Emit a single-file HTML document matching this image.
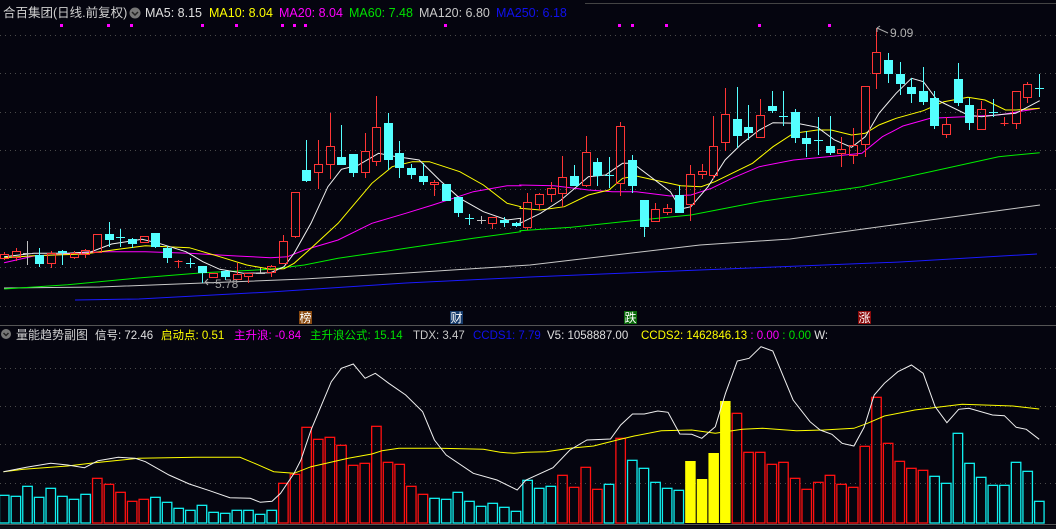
<!DOCTYPE html>
<html><head><meta charset="utf-8"><style>
html,body{margin:0;padding:0;background:#05050f;width:1056px;height:529px;overflow:hidden}
svg{display:block}
text{font-family:"Liberation Sans","Noto Sans CJK SC",sans-serif;font-size:12.5px}
text.sm{font-size:11.5px}
text.md{font-size:12px}
</style></head><body>
<svg id="s" width="1056" height="529" viewBox="0 0 1056 529" xmlns="http://www.w3.org/2000/svg">
<rect width="1056" height="529" fill="#05050f"/>
<g id="grid" stroke="#4a4a4a" stroke-width="1" stroke-dasharray="1,4">
<line x1="0" y1="35.5" x2="1056" y2="35.5"/><line x1="0" y1="73.5" x2="1056" y2="73.5"/>
<line x1="0" y1="112.5" x2="1056" y2="112.5"/><line x1="0" y1="150.5" x2="1056" y2="150.5"/>
<line x1="0" y1="189.5" x2="1056" y2="189.5"/><line x1="0" y1="228.5" x2="1056" y2="228.5"/>
<line x1="0" y1="267.5" x2="1056" y2="267.5"/><line x1="0" y1="306.5" x2="1056" y2="306.5"/>
<line x1="0" y1="368.5" x2="1056" y2="368.5"/><line x1="0" y1="406.5" x2="1056" y2="406.5"/>
<line x1="0" y1="444.5" x2="1056" y2="444.5"/><line x1="0" y1="483.5" x2="1056" y2="483.5"/>
</g>
<line x1="585" y1="3.5" x2="1056" y2="3.5" stroke="#444"/>
<line x1="0" y1="325.5" x2="1056" y2="325.5" stroke="#555"/>
<line x1="0" y1="524.5" x2="1056" y2="524.5" stroke="#555"/>
<rect x="0" y="526" width="1056" height="3" fill="#101018"/>
<g id="lines" fill="none" stroke-width="1"></g>
<g id="candles"></g>
<g id="vol"></g>
<g id="vlines" fill="none" stroke-width="1"></g>
<text x="3" y="17" fill="#d0d0d0">合百集团(日线.前复权)</text>
<circle cx="135" cy="13" r="5.5" fill="#777"/>
<path d="M132 12 L135 15 L138 12" stroke="#222" stroke-width="1.5" fill="none"/>
<text x="145" y="17" fill="#e0e0e0">MA5: 8.15</text>
<text x="209" y="17" fill="#ffff00">MA10: 8.04</text>
<text x="279" y="17" fill="#ff00ff">MA20: 8.04</text>
<text x="349" y="17" fill="#00e000">MA60: 7.48</text>
<text x="419" y="17" fill="#c8c8c8">MA120: 6.80</text>
<text x="496" y="17" fill="#1010ee">MA250: 6.18</text>
<g fill="#ff00ff">
<rect x="60" y="24" width="3" height="3"/><rect x="107" y="24" width="3" height="3"/><rect x="130" y="24" width="3" height="3"/>
<rect x="201" y="24" width="3" height="3"/><rect x="235" y="24" width="3" height="3"/><rect x="281" y="24" width="3" height="3"/>
<rect x="293" y="24" width="3" height="3"/><rect x="304" y="24" width="3" height="3"/><rect x="444" y="24" width="3" height="3"/>
<rect x="618" y="24" width="3" height="3"/><rect x="631" y="24" width="3" height="3"/><rect x="665" y="24" width="3" height="3"/>
<rect x="758" y="24" width="3" height="3"/><rect x="828" y="24" width="3" height="3"/>
</g>
<path d="M877 28 L888 33 M877 28 l0 4 M877 28 l3 -2" stroke="#aaa" fill="none"/>
<text x="890" y="37" fill="#b0b0b0" class="md">9.09</text>
<path d="M205 282 L214 283 M205 282 l3 -3 M205 282 l3 3" stroke="#aaa" fill="none"/>
<text x="215" y="288" fill="#a0a0a0" class="md">5.78</text>
<rect x="299" y="311" width="13" height="13" fill="#8a4a10"/><text x="299.5" y="322" fill="#fff" class="md">榜</text>
<rect x="450" y="311" width="13" height="13" fill="#153a6a"/><text x="450.5" y="322" fill="#fff" class="md">财</text>
<rect x="624" y="311" width="13" height="13" fill="#0a6a0a"/><text x="624.5" y="322" fill="#fff" class="md">跌</text>
<rect x="858" y="311" width="13" height="13" fill="#8a0a0a"/><text x="858.5" y="322" fill="#fff" class="md">涨</text>
<circle cx="6" cy="334" r="5" fill="#777"/>
<path d="M3.5 333 L6 335.5 L8.5 333" stroke="#222" stroke-width="1.5" fill="none"/>
<text x="16" y="339" fill="#d0d0d0" class="md">量能趋势副图</text>
<text x="95" y="339" fill="#e0e0e0" class="sm">信号: 72.46</text>
<text x="161" y="339" fill="#ffff00" class="sm">启动点: 0.51</text>
<text x="234" y="339" fill="#ff00ff" class="sm">主升浪: -0.84</text>
<text x="310" y="339" fill="#00e000" class="sm">主升浪公式: 15.14</text>
<text x="413" y="339" fill="#c8c8c8" class="sm">TDX: 3.47</text>
<text x="473" y="339" fill="#1010ee" class="sm">CCDS1: 7.79</text>
<text x="547" y="339" fill="#e0e0e0" class="sm">V5: 1058887.00</text>
<text x="641" y="339" class="sm" xml:space="preserve"><tspan fill="#ffff00">CCDS2: 1462846.13</tspan><tspan fill="#ff00ff"> : 0.00</tspan><tspan fill="#00e000"> : 0.00</tspan><tspan fill="#e0e0e0"> W:</tspan></text>
</svg>
<script>
var NS="http://www.w3.org/2000/svg";
function el(p,t,a){var e=document.createElementNS(NS,t);for(var k in a)e.setAttribute(k,a[k]);p.appendChild(e);return e;}
var C=[
["r",523,535,515,540],["r",513,530,505,542],["g",518,518,483,555],["c",525,551,503,560],["r",520,550,513,563],
["c",513,520,510,556],["r",520,532,513,537],["r",510,522,508,533],["r",462,515,462,520],["c",462,480,426,500],
["c",470,470,447,500],["c",478,492,475,505],["r",468,485,468,490],["c",459,500,459,503],["c",503,533,497,548],
["r",543,543,540,563],["c",548,548,535,565],["c",558,578,558,610],["r",578,592,578,595],["c",573,590,570,600],
["r",583,596,550,600],["r",580,588,578,610],["g",578,578,563,583],["r",558,577,556,590],["r",484,548,465,552],
["r",337,467,337,473],["c",270,302,180,305],["r",252,275,180,327],["r",198,253,98,297],["c",232,254,135,254],
["c",222,278,222,290],["r",213,275,158,294],["r",142,242,48,258],["c",128,240,98,270],["c",218,263,183,293],
["c",263,285,253,298],["c",288,305,248,315],["r",306,313,300,347],["c",312,362,312,362],["c",350,398,350,412],
["c",413,413,402,435],["g",420,420,408,432],["r",412,430,412,447],["c",420,428,410,440],["c",428,437,425,440]];
var D=[
["r",547,622,520,630],["r",522,553,520,570],["r",505,523,485,545],["r",472,520,408,560],["c",468,497,435,497],
["r",397,495,348,500],["c",427,467,413,497],["c",465,465,410,503],["r",319,490,306,527],["c",420,497,405,520],
["c",540,620,540,650],["r",568,602,548,605],["r",565,575,553,585],["c",525,578,497,578],["r",462,553,436,602],
["r",453,463,432,477],["r",378,465,288,478],["r",283,367,204,392],["c",297,347,200,385],["c",321,338,255,360],
["r",286,350,237,355],["c",258,272,213,280],["c",287,287,213,317],["c",276,355,266,368],["c",353,373,333,412],
["c",360,360,290,405],["c",378,398,288,405],["r",388,400,350,440],["r",375,405,325,432],["r",198,373,198,412],
["r",97,158,25,207],["c",120,162,98,190],["c",162,192,125,225],["c",201,222,174,250],["c",213,245,141,255],
["c",235,318,213,327],["r",313,343,292,355],["c",177,250,128,258],["c",255,308,233,330],["r",268,328,243,330],
["c",276,276,237,290],["r",310,310,290,318],["r",213,310,213,328],["r",193,230,186,250],["c",204,204,162,230]];
var all=[];C.forEach(function(a){all.push([a[0],80+a[1]/3,80+a[2]/3,80+a[3]/3,80+a[4]/3]);});
D.forEach(function(a){all.push([a[0],20+a[1]/3,20+a[2]/3,20+a[3]/3,20+a[4]/3]);});
function X(i){return 4+i*11.63;}
var cg=document.getElementById("candles");
all.forEach(function(a,i){
 var x=Math.round(X(i))+0.5,col=a[0]=="r"?"#ff3535":a[0]=="c"?"#54ffff":"#c0c0c0";
 var bt=Math.round(a[1]),bb=Math.round(a[2]),wt=Math.round(a[3]),wb=Math.round(a[4]);
 if(a[0]=="r"){
  if(wt<bt)el(cg,"line",{x1:x,y1:wt,x2:x,y2:bt,stroke:col});
  if(wb>bb)el(cg,"line",{x1:x,y1:bb,x2:x,y2:wb,stroke:col});
  if(bb-bt<1)el(cg,"line",{x1:x-4,y1:bt+0.5,x2:x+4,y2:bt+0.5,stroke:col});
  else el(cg,"rect",{x:x-4,y:bt+0.5,width:8,height:bb-bt,fill:"none",stroke:col});
 }else{
  el(cg,"line",{x1:x,y1:wt,x2:x,y2:wb,stroke:col});
  if(bb-bt<1)el(cg,"line",{x1:x-4.5,y1:bt+0.5,x2:x+4.5,y2:bt+0.5,stroke:col});
  else el(cg,"rect",{x:x-4.5,y:bt,width:9,height:bb-bt,fill:col});
 }
});
var V=[["c",[466,469,439,472,445,469,478,463]],["r",[415,433,457,484,478]],["c",[472,487,505,511,496,517,520,511,511,523,511]],
["r",[430,403,262,298,292,316,376,370,259,367,373,439,463]],["c",[475,478,457,484,499,490,502,514,421,445,439]],
["r",[406,442,382,448]],["c",[433]],["r",[295]],["c",[361,385,427,445,451]],["y",[363,417,339,183]],
["r",[220,337,337,373,367,415,448,427,406,433,442,319,172,310,364,385,391]],["c",[409,430,280,370,412,436,436,367,394,484]]];
var vg=document.getElementById("vol"),k=0;
V.forEach(function(g){g[1].forEach(function(t){
 var y=340+t/3,x=X(k)-5;var col=g[0]=="r"?"#ff1010":g[0]=="c"?"#10f0f0":"#ffff00";
 if(g[0]=="y")el(vg,"rect",{x:x,y:y,width:10.5,height:523-y,fill:col});
 else el(vg,"rect",{x:x+0.5,y:y,width:9.5,height:523-y,fill:"none",stroke:col,"stroke-width":1.3});
 k++;});});
function pl(g,pts3,pts4,col){var s=[];
 pts3.forEach(function(p){s.push((p[0]/2.958).toFixed(1)+","+(80+p[1]/3).toFixed(1));});
 pts4.forEach(function(p){s.push((520+p[0]/2.925).toFixed(1)+","+(20+p[1]/3).toFixed(1));});
 el(g,"polyline",{points:s.join(" "),stroke:col});}
var lg=document.getElementById("lines");
el(lg,"polyline",{points:"75,300 139,299 270,292 406,283 530,277 700,270 900,262 1037,254",stroke:"#1a1aff"});
el(lg,"polyline",{points:"4,288 100,287 203,283 304,279 406,273 530,265 700,245 790,239 930,220 1040,205",stroke:"#c8c8c8"});
pl(lg,[[12,627],[200,614],[400,595],[600,578],[800,568],[900,555],[1000,535],[1200,505],[1400,475],[1540,455]],
 [[0,632],[150,622],[300,605],[500,585],[700,545],[900,515],[1000,500],[1200,455],[1400,410],[1520,398]],"#00ee00");
pl(lg,[[12,548],[100,528],[200,522],[300,515],[430,515],[560,520],[700,528],[800,533],[850,530],[900,510],[1000,480],[1100,430],[1200,400],[1280,375],[1400,335],[1500,317],[1540,317]],
 [[0,495],[100,497],[200,510],[270,515],[340,515],[440,528],[500,525],[560,505],[620,475],[700,440],[800,420],[900,410],[1000,400],[1060,350],[1120,318],[1200,295],[1300,290],[1400,285],[1520,265]],"#ff00ff");
pl(lg,[[12,533],[100,527],[250,522],[350,508],[430,497],[560,503],[650,530],[730,555],[800,568],[840,566],[870,550],[920,505],[1000,430],[1100,310],[1160,260],[1220,245],[1270,245],[1360,275],[1430,315],[1500,370],[1540,380]],
 [[0,565],[60,570],[130,560],[200,525],[260,510],[300,475],[340,468],[430,488],[470,497],[530,500],[570,485],[620,460],[680,430],[740,380],[800,340],[870,330],[910,330],[970,345],[1010,340],[1050,315],[1100,295],[1180,272],[1240,245],[1310,232],[1360,240],[1420,270],[1450,270],[1520,265]],"#ffff00");
pl(lg,[[12,530],[100,520],[200,520],[270,515],[330,492],[420,478],[470,490],[550,515],[600,545],[650,568],[720,580],[800,578],[840,560],[870,520],[920,430],[970,320],[1010,268],[1060,255],[1120,220],[1160,228],[1240,240],[1300,300],[1360,355],[1430,395],[1500,420],[1540,415]],
 [[0,610],[60,580],[120,540],[200,470],[250,465],[300,430],[330,430],[440,515],[470,567],[500,560],[550,500],[600,420],[650,370],[700,330],[740,308],[810,310],[870,322],[920,360],[970,382],[1010,350],[1050,280],[1100,220],[1145,175],[1180,185],[1220,240],[1310,285],[1350,290],[1400,284],[1450,280],[1520,242]],"#f0f0f0");
function pv(g,a5,a6,col){var s=[];
 a5.forEach(function(p){s.push((p[0]/2.958).toFixed(1)+","+(340+p[1]/3).toFixed(1));});
 a6.forEach(function(p){s.push((526+p[0]/2.958).toFixed(1)+","+(340+p[1]/3).toFixed(1));});
 el(g,"polyline",{points:s.join(" "),stroke:col});}
var vl=document.getElementById("vlines");
pv(vl,[[10,395],[70,388],[200,378],[280,368],[410,355],[580,352],[710,352],[760,373],[810,395],[870,400],[920,380],[1030,355],[1100,342],[1130,332],[1180,325],[1300,325],[1430,328],[1480,337],[1520,340]],
 [[0,337],[60,335],[130,325],[200,318],[270,300],[320,288],[400,272],[490,270],[560,280],[640,268],[700,265],[800,272],[880,270],[970,265],[1010,250],[1060,228],[1150,210],[1290,193],[1440,198],[1518,207]],"#ffff00");
pv(vl,[[10,395],[78,382],[150,370],[200,375],[250,383],[290,362],[350,352],[400,355],[430,365],[500,405],[560,432],[620,452],[680,473],[740,475],[770,487],[805,484],[830,460],[870,400],[890,360],[920,270],[980,125],[1010,85],[1045,72],[1080,115],[1110,100],[1150,130],[1200,165],[1250,215],[1285,300],[1320,345],[1400,400],[1470,420],[1530,450]],
 [[0,420],[80,383],[130,330],[180,300],[250,297],[280,255],[315,222],[350,222],[390,213],[420,217],[455,282],[490,283],[520,295],[560,260],[590,160],[625,63],[660,55],[695,20],[730,33],[790,180],[840,245],[870,270],[905,283],[935,310],[970,318],[1000,262],[1030,165],[1060,130],[1100,95],[1140,75],[1175,100],[1210,200],[1245,248],[1280,208],[1310,205],[1380,225],[1415,227],[1450,262],[1480,268],[1518,298]],"#f0f0f0");
</script>
</body></html>
